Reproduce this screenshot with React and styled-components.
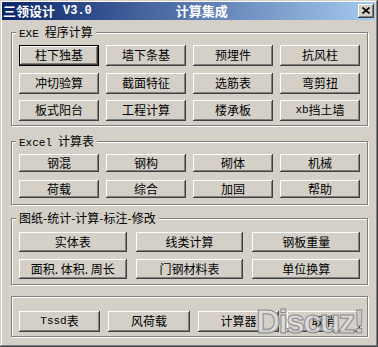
import React from 'react';
import styled, { createGlobalStyle, css } from 'styled-components';

const Global = createGlobalStyle`
  html, body { margin: 0; padding: 0; background: #D4D0C8; }
  body { font-family: "Noto Sans CJK SC", "Liberation Sans", sans-serif; font-size: 12px; color: #000; }
`;

const Window = styled.div`
  position: relative;
  box-sizing: border-box;
  width: 378px;
  height: 347px;
  padding: 2px 3px 3px 2px;
  background: #D4D0C8;
  box-shadow: inset -1px -1px #404040, inset 1px 1px #D4D0C8, inset -2px -2px #808080, inset 2px 2px #fff;
  display: flex;
  flex-direction: column;
  overflow: hidden;
`;

const TitleBar = styled.div`
  flex: none;
  height: 18px;
  display: flex;
  align-items: center;
  padding-left: 1px;
  background: linear-gradient(to right, #0A246A, #A6CAF0);
  color: #fff;
  font-weight: bold;
  font-size: 13px;
  line-height: 18px;
  white-space: nowrap;
`;

const Lat = styled.span`
  font-family: "Liberation Mono", "DejaVu Sans Mono", monospace;
  font-size: ${p => p.$size || 11}px;
  margin-left: ${p => p.$ml || 0}px;
  margin-right: ${p => p.$mr || 0}px;
`;

const Caption = styled.span`
  margin-left: ${p => p.$ml}px;
`;

const CloseBtn = styled.div`
  margin-left: auto;
  margin-right: 1px;
  width: 16px;
  height: 14px;
  box-sizing: border-box;
  background: #D4D0C8;
  box-shadow: inset -1px -1px #404040, inset 1px 1px #fff, inset -2px -2px #808080;
  display: flex;
  align-items: center;
  justify-content: center;
  padding-bottom: 1px;
`;

const Group = styled.div`
  position: relative;
  flex: none;
  margin: ${p => p.$mt}px 7px 0 9px;
  border: 1px solid #808080;
  box-shadow: inset 1px 1px #fff, 1px 1px #fff;
  padding: ${p => p.$pad};
`;

const Legend = styled.span`
  position: absolute;
  top: -8px;
  left: 4px;
  height: 14px;
  line-height: 14px;
  padding: 0 3px;
  background: #D4D0C8;
  font-size: 12px;
  white-space: nowrap;
`;

const ButtonGrid = styled.div`
  display: grid;
  grid-template-columns: ${p => p.$cols};
  grid-auto-rows: ${p => p.$h}px;
  column-gap: ${p => p.$cg}px;
  row-gap: ${p => p.$rg}px;
`;

const Btn = styled.button`
  box-sizing: border-box;
  margin: 0;
  padding: 0 0 1px;
  border: none;
  background: #D4D0C8;
  color: #000;
  font-family: "Noto Sans CJK SC", "Liberation Sans", sans-serif;
  font-size: 12px;
  line-height: 1;
  white-space: pre;
  display: flex;
  align-items: center;
  justify-content: center;
  box-shadow: inset -1px -1px #404040, inset 1px 1px #fff, inset -2px -2px #808080, inset 2px 2px #D4D0C8;
  ${p => p.$default && css`
    border: 1px solid #000;
    box-shadow: inset -1px -1px #404040, inset 1px 1px #fff, inset -2px -2px #808080;
  `}
`;

const Watermark = styled.div`
  position: absolute;
  left: 256px;
  top: 304px;
  font-family: "Liberation Sans", Arial, sans-serif;
  font-weight: bold;
  font-size: 34px;
  line-height: 34px;
  letter-spacing: -2px;
  color: rgba(222, 222, 222, 0.85);
  -webkit-text-stroke: 1px #8a8a8a;
  pointer-events: none;
  white-space: nowrap;
`;

const exeButtons = [
  ['柱下独基', true], ['墙下条基'], ['预埋件'], ['抗风柱'],
  ['冲切验算'], ['截面特征'], ['选筋表'], ['弯剪扭'],
  ['板式阳台'], ['工程计算'], ['楼承板'], [<><Lat>xb</Lat>挡土墙</>],
];

const excelButtons = ['钢混', '钢构', '砌体', '机械', '荷载', '综合', '加固', '帮助'];
const drawButtons = ['实体表', '线类计算', '钢板重量', '面积. 体积. 周长', '门钢材料表', '单位换算'];
const bottomButtons = [<><Lat>Tssd</Lat>表</>, '风荷载', '计算器', '取消'];

export default function App() {
  return (
    <>
      <Global />
      <Window>
        <TitleBar>
          <span>三领设计</span>
          <Lat $size={12} $ml={8}>V3.0</Lat>
          <Caption $ml={84}>计算集成</Caption>
          <CloseBtn>
            <svg width="8" height="7" viewBox="0 0 8 7">
              <path d="M0.5 0.5 L7.5 6.5 M7.5 0.5 L0.5 6.5" stroke="#000" strokeWidth="1.6" fill="none" />
            </svg>
          </CloseBtn>
        </TitleBar>

        <Group $mt={12} $pad="12px 7px 4px">
          <Legend><Lat $mr={6}>EXE</Lat>程序计算</Legend>
          <ButtonGrid $cols="repeat(4, 1fr)" $h={21} $cg={7} $rg={6.5}>
            {exeButtons.map(([label, def], i) => (
              <Btn key={i} $default={def}>{label}</Btn>
            ))}
          </ButtonGrid>
        </Group>

        <Group $mt={15} $pad="12px 7px 6px">
          <Legend><Lat $mr={6}>Excel</Lat>计算表</Legend>
          <ButtonGrid $cols="repeat(4, 1fr)" $h={18} $cg={7} $rg={8}>
            {excelButtons.map(label => <Btn key={label}>{label}</Btn>)}
          </ButtonGrid>
        </Group>

        <Group $mt={13} $pad="13px 7px 5px">
          <Legend>图纸-统计-计算-标注-修改</Legend>
          <ButtonGrid $cols="repeat(3, 1fr)" $h={20} $cg={9} $rg={7}>
            {drawButtons.map(label => <Btn key={label}>{label}</Btn>)}
          </ButtonGrid>
        </Group>

        <Group $mt={11} $pad="14px 7px 4px">
          <ButtonGrid $cols="81px 82px 81px 73px" $h={21} $cg={8} $rg={0}>
            {bottomButtons.map((label, i) => <Btn key={i}>{label}</Btn>)}
          </ButtonGrid>
        </Group>

        <Watermark>Discuz!</Watermark>
      </Window>
    </>
  );
}
